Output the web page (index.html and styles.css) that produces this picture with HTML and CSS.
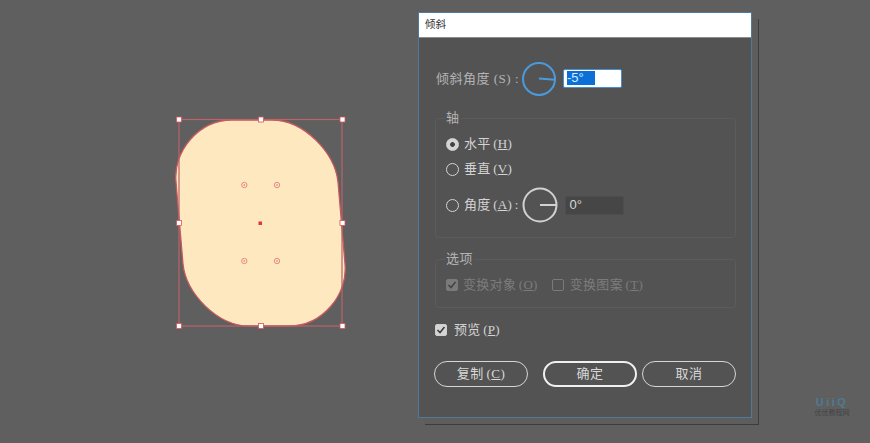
FILE: index.html
```html
<!DOCTYPE html>
<html lang="zh">
<head>
<meta charset="utf-8">
<title>倾斜</title>
<link rel="stylesheet" href="styles.css">
</head>
<body>
<main class="stage">
  <svg class="artwork" width="200" height="240" viewBox="160 100 200 240">
    <path class="shape" d="M232 120 L272 120 C304 120 335 153 338 182 L345 264 C348 294 323 326 289 326 L249 326 C217 326 186 293 183 264 L176 182 C173 152 198 120 232 120 Z"/>
    <rect class="bbox" x="179" y="119.5" width="163" height="206.5"/>
    <g class="handles">
      <rect x="176.500" y="117" width="5" height="5"/>
      <rect x="258.500" y="117" width="5" height="5"/>
      <rect x="340" y="117" width="5" height="5"/>
      <rect x="176.500" y="220.500" width="5" height="5"/>
      <rect x="340" y="220.500" width="5" height="5"/>
      <rect x="176.500" y="323.500" width="5" height="5"/>
      <rect x="258.500" y="323.500" width="5" height="5"/>
      <rect x="340" y="323.500" width="5" height="5"/>
    </g>
    <rect class="center-dot" x="258.500" y="221.500" width="3.500" height="3.500"/>
    <g class="widget">
      <circle cx="244.300" cy="185" r="2.700"/><circle class="core" cx="244.300" cy="185" r="0.800"/>
      <circle cx="277" cy="185" r="2.700"/><circle class="core" cx="277" cy="185" r="0.800"/>
      <circle cx="244.300" cy="261" r="2.700"/><circle class="core" cx="244.300" cy="261" r="0.800"/>
      <circle cx="277" cy="261" r="2.700"/><circle class="core" cx="277" cy="261" r="0.800"/>
    </g>
  </svg>

  <section class="dialog">
    <header class="titlebar">倾斜</header>
    <div class="content">
      <div class="skew-row">
        <span class="label">倾斜角度 (S) :</span>
        <svg class="dial dial-active" width="36" height="36" viewBox="0 0 36 36">
          <circle cx="18" cy="18" r="16"/>
          <line x1="18" y1="17.500" x2="34" y2="18.800"/>
        </svg>
        <span class="input input-active"><span class="selected">-5°</span></span>
      </div>

      <fieldset class="group axis">
        <legend>轴</legend>
        <div class="row"><span class="radio on"></span><span class="label">水平 (<u>H</u>)</span></div>
        <div class="row"><span class="radio"></span><span class="label">垂直 (<u>V</u>)</span></div>
        <div class="row row-angle">
          <span class="radio"></span><span class="label">角度 (<u>A</u>) :</span>
          <svg class="dial" width="36" height="36" viewBox="0 0 36 36">
            <circle cx="18" cy="18" r="16.500"/>
            <line x1="18" y1="18" x2="34" y2="18"/>
          </svg>
          <span class="input">0°</span>
        </div>
      </fieldset>

      <fieldset class="group options">
        <legend>选项</legend>
        <div class="row disabled">
          <span class="check checked"><svg width="12" height="12" viewBox="0 0 12 12"><path d="M2.500 6 L5 8.500 L9.500 3"/></svg></span>
          <span class="label">变换对象 (<u>O</u>)</span>
          <span class="check second"></span>
          <span class="label">变换图案 (<u>T</u>)</span>
        </div>
      </fieldset>

      <div class="row preview">
        <span class="check checked"><svg width="12" height="12" viewBox="0 0 12 12"><path d="M2.500 6 L5 8.500 L9.500 3"/></svg></span>
        <span class="label">预览 (<u>P</u>)</span>
      </div>

      <div class="buttons">
        <button class="btn">复制 (<u>C</u>)</button>
        <button class="btn primary">确定</button>
        <button class="btn">取消</button>
      </div>
    </div>
  </section>

  <div class="watermark">
    <span class="mark">UiiQ</span>
    <span class="site">优优教程网</span>
  </div>
</main>
</body>
</html>
```
FILE: styles.css
```css
* { box-sizing: border-box; }
html, body { margin: 0; height: 100%; }
body {
  background: #5f5f5f;
  overflow: hidden;
  font-family: "Liberation Serif", "Noto Sans CJK SC", serif;
  font-size: 13px;
  color: #dcdcdc;
}
.stage {
  display: flex;
  align-items: flex-start;
  width: 870px;
  height: 443px;
  padding-top: 12px;
  position: relative;
}
.artwork { margin: 88px 0 0 160px; flex: none; display: block; }
.shape { fill: #fde8c0; stroke: #c65a60; stroke-width: 1.300; }
.bbox { fill: none; stroke: #bd6268; stroke-width: 1.200; }
.handles rect { fill: #fff; stroke: #d0555c; stroke-width: 0.800; }
.center-dot { fill: #e2343c; }
.widget circle { fill: none; stroke: #d8666c; stroke-width: 0.700; }
.widget .core { fill: #d8666c; stroke: none; }

.dialog {
  margin-left: 58px;
  width: 334px;
  height: 406px;
  flex: none;
  background: #535353;
  border: 1px solid #4f7a9c;
  box-shadow: 6px 6px 0 0 #5d5d5d, 7px 7px 0 0 #3c3c3c;
}
.titlebar {
  height: 25px;
  background: #fff;
  border-bottom: 1px solid #8c8c8c;
  color: #333;
  font-size: 10.500px;
  line-height: 24px;
  padding-left: 6px;
}
.content { padding: 24px 15px 0 16px; }
.label { letter-spacing: 0.300px; word-spacing: -1px; white-space: nowrap; line-height: 20px; }
.skew-row { display: flex; align-items: center; height: 33px; color: #b4b4b4; }
.skew-row .label { width: 85px; margin-left: 1px; flex: none; letter-spacing: 0.500px; word-spacing: 0; }
.skew-row .dial { margin-right: 6px; }
.dial { flex: none; display: block; }
.dial circle { fill: none; stroke: #d2d2d2; stroke-width: 2; }
.dial line { stroke: #d2d2d2; stroke-width: 2; }
.dial-active circle, .dial-active line { stroke: #4b9bdc; }

.input {
  display: block;
  flex: none;
  width: 59px;
  height: 19px;
  background: #464646;
  border: 1px solid #4d4d4d;
  border-radius: 2px;
  line-height: 15px;
  padding-left: 3px;
  color: #d8d8d8;
  font-family: "Liberation Sans", sans-serif;
  font-size: 13px;
}
.input-active {
  background: #fff;
  border: 1px solid #4a8fd0;
  padding: 1px 0 0 3px;
  line-height: 14px;
}
.selected {
  display: block;
  width: 28px;
  height: 14px;
  background: #0a6fd6;
  color: #d8ecff;
}

.group {
  margin: 0;
  width: 301px;
  border: 1px solid #5b5b5b;
  border-radius: 3px;
  padding: 0 0 0 10px;
  min-width: 0;
}
.group legend {
  padding: 0 1px;
  margin-left: -1px;
  height: 16px;
  line-height: 16px;
  font-size: 13px;
  color: #b4b4b4;
  letter-spacing: 0.500px;
}
.axis { margin-top: 15px; padding-top: 8px; padding-bottom: 14px; }
.options { margin-top: 13px; padding-top: 8px; padding-bottom: 12px; }
.row { display: flex; align-items: center; height: 20px; color: #d4d4d4; }
.row + .row { margin-top: 5px; }
.row-angle { height: 36px; margin-top: 8px !important; }
.row-angle .dial { margin: 0 0 0 3px; }
.row-angle .input { margin-left: 7px; padding-left: 4px; }
.radio {
  flex: none;
  width: 13px;
  height: 13px;
  border: 1.300px solid #d4d4d4;
  border-radius: 50%;
  margin-right: 5px;
}
.radio.on {
  background: radial-gradient(circle, #444 0 2px, #d4d4d4 2.800px);
}
.check {
  flex: none;
  width: 12px;
  height: 12px;
  border: 1px solid #cfcfcf;
  border-radius: 2px;
  margin-right: 7px;
  display: block;
}
.check svg { display: block; margin: -1px; }
.check path { fill: none; stroke: #3d3d3d; stroke-width: 1.600; }
.check.checked { background: #d4d4d4; }
.disabled { color: #7c7c7c; }
.disabled .check { border-color: #7a7a7a; }
.disabled .check.checked { background: #7a7a7a; }
.disabled .check.checked path { stroke: #444; }
.disabled .second { margin-left: 14px; margin-right: 6px; }
.disabled .check:first-child { margin-left: 0; margin-right: 5px; }
.preview { margin-top: 12px; }
.preview .check { margin-right: 7px; }
.buttons { display: flex; margin-top: 21px; margin-left: -1px; }
.btn {
  width: 94px;
  height: 26px;
  background: transparent;
  border: 1.500px solid #d6d6d6;
  border-radius: 13px;
  color: #d8d8d8;
  font: inherit;
  letter-spacing: 0.500px;
  word-spacing: -1px;
  padding: 0;
  line-height: 20px;
}
.btn.primary { margin: 0 5px 0 15px; border: 2px solid #f0f0f0; }
.watermark {
  position: absolute;
  left: 814px;
  top: 397px;
  display: flex;
  flex-direction: column;
  align-items: center;
  width: 36px;
}
.mark {
  font-family: "Liberation Sans", sans-serif;
  font-weight: 700;
  font-size: 11px;
  line-height: 11px;
  color: #4f7a92;
  letter-spacing: 2.500px;
  white-space: nowrap;
}
.site { font-size: 7px; line-height: 8px; color: #444; white-space: nowrap; font-family: "Noto Sans CJK SC", sans-serif; }
```
